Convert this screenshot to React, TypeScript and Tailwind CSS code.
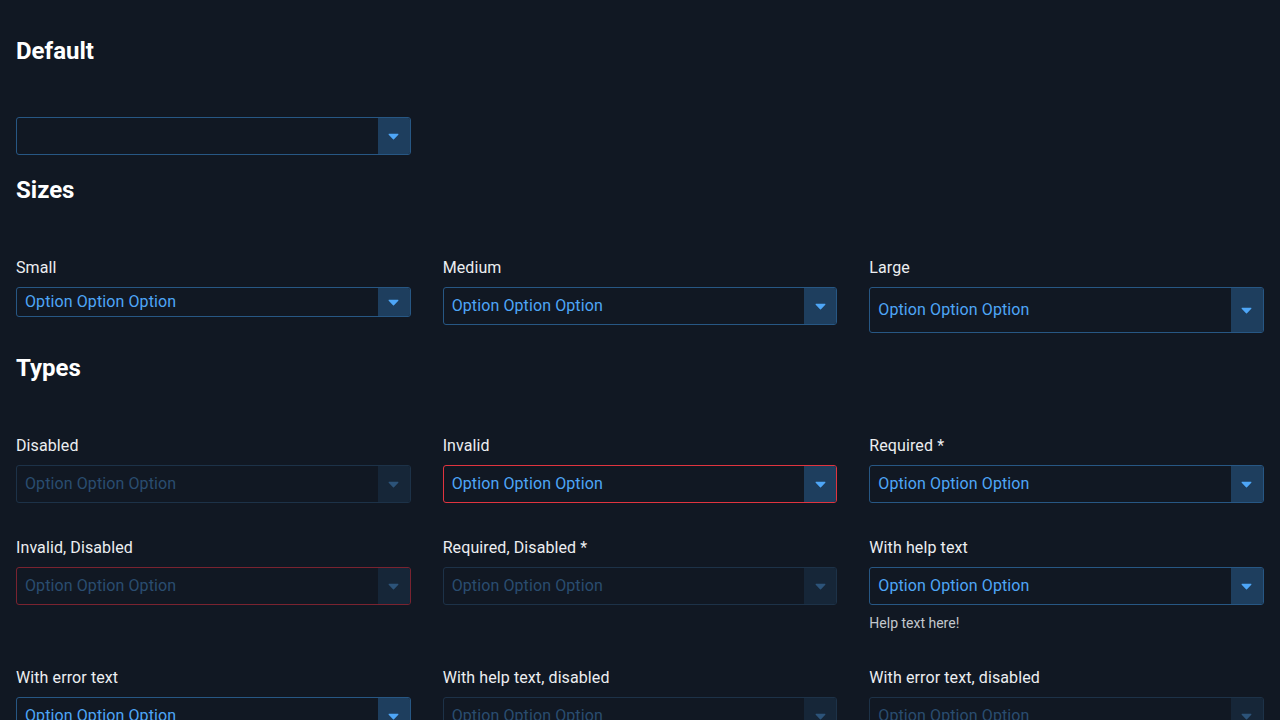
import { clsx } from 'clsx';

type Size = 'sm' | 'md' | 'lg';

const heights: Record<Size, string> = {
  sm: 'h-[30px]',
  md: 'h-[38px]',
  lg: 'h-[46px]',
};

function Caret({ disabled }: { disabled?: boolean }) {
  return (
    <svg width="11" height="7" viewBox="0 0 11 7" aria-hidden>
      <path
        d="M1.2 0.8h8.6c.5 0 .8.6.5 1L6 6.2c-.3.3-.7.3-1 0L.7 1.8c-.3-.4 0-1 .5-1z"
        fill={disabled ? '#2c5379' : '#4ea6f7'}
      />
    </svg>
  );
}

function Select({
  value,
  size = 'md',
  disabled,
  invalid,
}: {
  value?: string;
  size?: Size;
  disabled?: boolean;
  invalid?: boolean;
}) {
  return (
    <div
      className={clsx(
        'flex w-full overflow-hidden rounded-[3px] border',
        heights[size],
        invalid
          ? disabled
            ? 'border-[#7a2330]'
            : 'border-[#e0343f]'
          : disabled
            ? 'border-[#1d3248]'
            : 'border-[#275784]',
      )}
    >
      <div
        className={clsx(
          'flex flex-1 items-center pl-2 text-base tracking-[0.1px]',
          disabled ? 'text-[#2a4d70]' : 'text-[#4ea6f7]',
        )}
      >
        {value}
      </div>
      <div
        className={clsx(
          'flex w-8 items-center justify-center',
          disabled ? 'bg-[#162638]' : 'bg-[#1e3e5e]',
        )}
      >
        <Caret disabled={disabled} />
      </div>
    </div>
  );
}

function Field({
  label,
  help,
  ...rest
}: {
  label: string;
  help?: string;
  size?: Size;
  disabled?: boolean;
  invalid?: boolean;
}) {
  return (
    <div className="flex flex-col">
      <label className="mb-2 text-base leading-[22px] tracking-[0.1px] text-[#eceef1]">{label}</label>
      <Select value="Option Option Option" {...rest} />
      {help && <p className="mt-2 text-sm leading-5 text-[#c3c7cd]">{help}</p>}
    </div>
  );
}

function Heading({ children }: { children: string }) {
  return <h2 className="text-2xl leading-8 font-bold text-white">{children}</h2>;
}

export default function App() {
  return (
    <div
      className="min-h-screen bg-[#111823] px-4 pt-[35px] pb-10"
      style={{ fontFamily: 'Roboto, "Liberation Sans", sans-serif' }}
    >
      <section>
        <Heading>Default</Heading>
        <div className="mt-[50px] grid grid-cols-3 gap-x-8">
          <Select />
        </div>
      </section>

      <section className="mt-[19px]">
        <Heading>Sizes</Heading>
        <div className="mt-[51px] grid grid-cols-3 items-start gap-x-8">
          <Field label="Small" size="sm" />
          <Field label="Medium" size="md" />
          <Field label="Large" size="lg" />
        </div>
      </section>

      <section className="mt-[19px]">
        <Heading>Types</Heading>
        <div className="mt-[51px] grid grid-cols-3 items-start gap-x-8 gap-y-[34px]">
          <Field label="Disabled" disabled />
          <Field label="Invalid" invalid />
          <Field label="Required *" />
          <Field label="Invalid, Disabled" invalid disabled />
          <Field label="Required, Disabled *" disabled />
          <Field label="With help text" help="Help text here!" />
          <Field label="With error text" />
          <Field label="With help text, disabled" disabled />
          <Field label="With error text, disabled" disabled />
        </div>
      </section>
    </div>
  );
}
